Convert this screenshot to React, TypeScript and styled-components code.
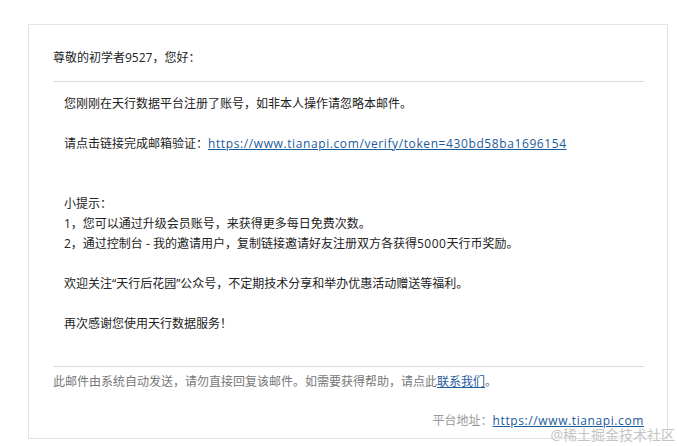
import styled, { createGlobalStyle } from "styled-components";

const GlobalStyle = createGlobalStyle`
  html, body {
    margin: 0;
    padding: 0;
    background: #fff;
  }

  body {
    font-family: "Open Sans", "Noto Sans CJK SC", sans-serif;
    font-size: 12px;
    color: #333;
  }
`;

const Page = styled.div`
  position: relative;
  width: 677px;
  height: 446px;
  overflow: hidden;
  padding: 24px 0 0 28px;
  box-sizing: border-box;
`;

const MailCard = styled.div`
  width: 640px;
  height: 415px;
  box-sizing: border-box;
  border: 1px solid #e4e4e4;
  padding: 23px 23px 6px 24px;
  line-height: 20px;
`;

const Greeting = styled.div`
  color: #222;
`;

const Divider = styled.hr<{ $top: number; $bottom: number }>`
  border: 0;
  border-top: 1px solid #dcdcdc;
  height: 0;
  margin: ${(p) => p.$top}px 0 ${(p) => p.$bottom}px;
`;

const MailBody = styled.div`
  padding-left: 11px;
  color: #222;
`;

const Para = styled.p<{ $gap?: number }>`
  margin: 0 0 ${(p) => p.$gap ?? 20}px;
`;

const MailLink = styled.a<{ $url?: boolean }>`
  color: #1c5b9a;
  text-decoration: underline;
  letter-spacing: ${(p) => (p.$url ? "0.6px" : "0")};
`;

const Amount = styled.span`
  letter-spacing: 0.5px;
`;

const FooterNote = styled.div`
  color: #777;
`;

const Address = styled.div`
  margin-top: 19px;
  text-align: right;
  color: #999;
`;

const Watermark = styled.div`
  position: absolute;
  right: 2px;
  bottom: 3px;
  font-size: 14px;
  line-height: 16px;
  color: #c4c4c4;
  text-shadow: 0 0 2px #fff;
  pointer-events: none;
`;

export default function App() {
  return (
    <>
      <GlobalStyle />
      <Page>
        <MailCard>
          <Greeting>尊敬的初学者9527，您好：</Greeting>
          <Divider $top={13} $bottom={12} />
          <MailBody>
            <Para>您刚刚在天行数据平台注册了账号，如非本人操作请忽略本邮件。</Para>
            <Para $gap={40}>
              请点击链接完成邮箱验证：
              <MailLink $url href="#">
                https://www.tianapi.com/verify/token=430bd58ba1696154
              </MailLink>
            </Para>
            <Para>
              小提示：
              <br />
              1，您可以通过升级会员账号，来获得更多每日免费次数。
              <br />
              2，通过控制台 - 我的邀请用户，复制链接邀请好友注册双方各获得<Amount>5000</Amount>天行币奖励。
            </Para>
            <Para>欢迎关注“天行后花园”公众号，不定期技术分享和举办优惠活动赠送等福利。</Para>
            <Para $gap={0}>再次感谢您使用天行数据服务！</Para>
          </MailBody>
          <Divider $top={32} $bottom={5} />
          <FooterNote>
            此邮件由系统自动发送，请勿直接回复该邮件。如需要获得帮助，请点此
            <MailLink href="#">联系我们</MailLink>。
          </FooterNote>
          <Address>
            平台地址：
            <MailLink $url href="#">
              https://www.tianapi.com
            </MailLink>
          </Address>
        </MailCard>
        <Watermark>@稀土掘金技术社区</Watermark>
      </Page>
    </>
  );
}
